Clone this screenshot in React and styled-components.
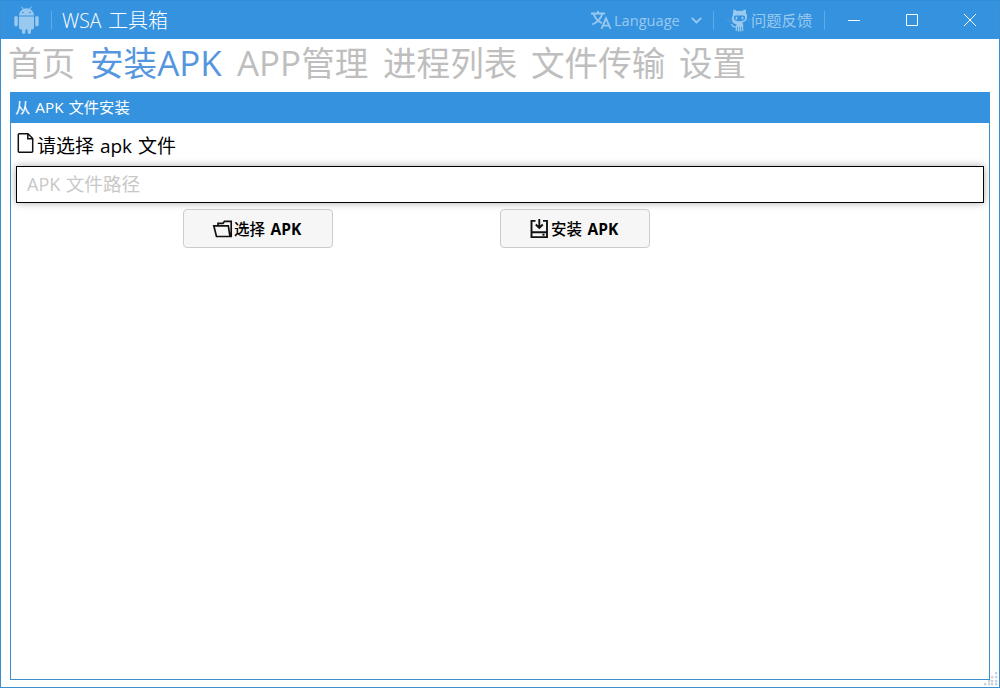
import React from 'react';
import styled, { createGlobalStyle } from 'styled-components';

const Global = createGlobalStyle`
  * { box-sizing: border-box; }
  body { margin: 0; font-family: "Open Sans", "Noto Sans CJK SC", sans-serif; }
`;

const Window = styled.div`
  position: relative;
  display: flex;
  flex-direction: column;
  width: 1000px;
  height: 688px;
  overflow: hidden;
  background: #fff;
  border: 1px solid #3b8fd0;
  border-top: 0;
`;

const TitleBar = styled.header`
  display: flex;
  align-items: center;
  flex: none;
  height: 39px;
  padding-left: 13px;
  background: #3492df;
  border-top: 1px solid #2b8ddc;
  color: #99c9ef;
`;

const Divider = styled.i`
  width: 1px;
  height: 19px;
  margin-left: ${(p) => p.$left || 0}px;
  background: #5fabe7;
`;

const Icon = styled.svg`
  display: block;
  flex: none;
  overflow: visible;
`;

const Text = styled.span`
  display: block;
  flex: none;
  width: ${(p) => p.$w}px;
  font-size: ${(p) => p.$size}px;
  line-height: 1.4;
  text-align: left;
  white-space: nowrap;
  font-weight: ${(p) => p.$weight || 400};
  word-spacing: ${(p) => p.$space || 0}px;
`;

const Latin = styled.span`
  font-size: ${(p) => p.$size || 1}em;
  font-weight: ${(p) => p.$weight || 'inherit'};
`;

const Title = styled(Text)`
  margin-left: 10px;
  padding-top: 1px;
  color: #fff;
`;

const Actions = styled.div`
  display: flex;
  align-items: center;
  height: 100%;
  margin-left: auto;
`;

const Action = styled.button`
  display: flex;
  align-items: center;
  width: ${(p) => p.$w}px;
  height: 38px;
  padding: 0 0 0 ${(p) => p.$pad}px;
  gap: ${(p) => p.$gap || 0}px;
  border: 0;
  background: none;
  color: inherit;
  font-family: inherit;
`;

const ActionText = styled(Text)`
  padding-top: 1px;
`;

const Control = styled.button`
  display: flex;
  align-items: center;
  justify-content: center;
  width: 58px;
  height: 38px;
  padding: 0;
  border: 0;
  background: none;
  color: #f4faff;
`;

const Tabs = styled.nav`
  display: flex;
  align-items: center;
  flex: none;
  height: 53px;
  padding: 0 0 4px 7px;
  gap: 15px;
`;

const Tab = styled(Text)`
  color: ${(p) => (p.$active ? '#5596de' : '#bebebe')};
`;

const Panel = styled.main`
  display: flex;
  flex-direction: column;
  flex: 1;
  margin: 0 9px 7px;
  border: 1px solid #3b8fd0;
`;

const PanelHeader = styled.div`
  display: flex;
  align-items: center;
  flex: none;
  height: 31px;
  margin: -1px -1px 0;
  padding-left: 5px;
  background: #3492df;
  color: #fff;
`;

const Form = styled.div`
  padding: 0 5px;
`;

const Label = styled.label`
  display: flex;
  align-items: center;
  height: 43px;
  padding: 3px 0 0 1px;
  gap: 3px;
  color: #000;
`;

const FileIcon = styled(Icon)`
  margin-top: -6px;
`;

const Field = styled.div`
  display: flex;
  align-items: center;
  height: 37px;
  padding: 0 0 0 10px;
  border: 1px solid #000;
  background: #fff;
  box-shadow: 0 0 8px rgba(0, 0, 0, 0.32);
  color: #c8c8c8;
`;

const Buttons = styled.div`
  display: flex;
  gap: 167px;
  padding: 6px 0 0 167px;
`;

const Button = styled.button`
  display: flex;
  align-items: center;
  width: 150px;
  height: 39px;
  padding: 0 0 0 28px;
  border: 1px solid #ccc;
  border-radius: 4px;
  background: #f6f6f6;
  color: #000;
  font-family: inherit;
`;

const ButtonText = styled(Text)`
  padding-top: 2px;
`;

const Grip = styled.svg`
  position: absolute;
  right: 0;
  bottom: 0;
`;

const Android = () => (
  <Icon width="25" height="28" viewBox="0 0 25 28" fill="currentColor">
    <path d="M5 9.6C5 6.5 6.7 4.5 8.8 3.2L7.2.9l.7-.5 1.7 2.4a9 9 0 0 1 5.8 0L17.1.4l.7.5-1.6 2.3C18.3 4.5 20 6.5 20 9.6zM9 5.7a.8.8 0 1 0 0 1.6.8.8 0 0 0 0-1.6m7 0a.8.8 0 1 0 0 1.6.8.8 0 0 0 0-1.6" fillRule="evenodd" />
    <path d="M5 10.6h15v11.2q0 1.7-1.7 1.7H17v2.7a1.7 1.7 0 0 1-3.4 0v-2.7h-2.2v2.7a1.7 1.7 0 0 1-3.4 0v-2.7H6.7Q5 23.5 5 21.8z" />
    <rect x="0.3" y="10" width="3.5" height="10.5" rx="1.75" />
    <rect x="21.2" y="10" width="3.5" height="10.5" rx="1.75" />
  </Icon>
);

const Translate = () => (
  <Icon width="20" height="19" viewBox="0 0 20 19" fill="none" stroke="currentColor" strokeWidth="1.8">
    <path d="M0 2.5h14M7 0v2.5M2.8 3c1 4 4 7 8.2 9.3M11.3 2.5c-1 4.5-4.500 8.500-10 11" />
    <path d="M10.500 17.900 15 7.300l4.500 10.600M12 14.700h6" />
  </Icon>
);

const Octocat = () => (
  <Icon width="22" height="23" viewBox="0 0 22 23">
    <path fill="currentColor" d="M4.3.6c1.500 0 2.700.8 3.500 1.300a17 17 0 0 1 5.400 0C14 1.400 15.200.6 16.700.6c.5 1.400.4 2.600.1 3.500 1.300 1.600 1.500 3.400 1 5.400-.7 2.700-2.700 3.600-4.800 4 .9.700 1.200 1.800 1.200 3v4.100c0 .7.400 1 .8 1.200h-2.200v-4h-.7v4.700h-1.300v-4.700h-.6v4.700H8.900v-4.700h-.7v4H6c.5-.2.800-.5.800-1.200v-2.200c-2 .4-3.300-.2-4-1.700-.4-.8-.8-1.300-1.500-1.600 1.500-.3 2.300.5 2.900 1.300.7.900 1.500 1.100 2.700.7.100-.7.400-1.200.9-1.600-2.300-.4-4.100-1.400-4.700-4-.5-2.100-.2-4 1-5.400-.3-1-.3-2.100.2-3.500" />
    <path fill="#3492df" d="M6.800 6.600c1.600-.2 5.800-.2 7.400 0 1.500.1 2.100 1.200 1.900 2.700-.3 2.300-2.100 2.900-5.600 2.900s-5.300-.6-5.600-2.900c-.2-1.500.4-2.600 1.900-2.700" />
    <g fill="currentColor"><ellipse cx="7.5" cy="8.9" rx="1" ry="1.5" /><ellipse cx="13.5" cy="8.9" rx="1" ry="1.5" /></g>
    <path stroke="currentColor" strokeWidth=".5" opacity=".35" d="M-3 10.5l6-.3M-1 12.5l4-.6M18 10.2l5 .3M18 12l3 .7" />
  </Icon>
);

export default function App() {
  const grip = [[11, 0], [7, 4], [11, 4], [4, 8], [7, 8], [11, 8], [0, 11], [4, 11], [7, 11], [11, 11]];
  return (
    <>
      <Global />
      <Window>
        <TitleBar>
          <Android />
          <Divider $left={12} />
          <Title $w={110} $size={19.9} $weight={300} $space={1.8}><Latin $size={0.97}>WSA </Latin>工具箱</Title>
          <Actions>
            <Action $w={123} $pad={1} $gap={3}>
              <Translate />
              <ActionText $w={74} $size={14.6}>Language</ActionText>
              <Icon width="11" height="7" viewBox="0 0 11 7" fill="none" stroke="currentColor" strokeWidth="1.8">
                <path d="m.8.8 4.700 4.700L10.200.8" />
              </Icon>
            </Action>
            <Divider />
            <Action $w={110} $pad={15}>
              <Octocat />
              <ActionText $w={64} $size={15.3}>问题反馈</ActionText>
            </Action>
            <Divider />
            <Control>
              <Icon width="12" height="12" stroke="currentColor"><path d="M0 6.500h12" /></Icon>
            </Control>
            <Control>
              <Icon width="12" height="12" fill="none" stroke="currentColor"><path d="M.5.5h11v11H.5z" /></Icon>
            </Control>
            <Control>
              <Icon width="12" height="12" stroke="currentColor"><path d="m0 0 12 12M12 0 0 12" /></Icon>
            </Control>
          </Actions>
        </TitleBar>
        <Tabs>
          <Tab $w={67} $size={33.6}>首页</Tab>
          <Tab $w={132} $size={33.6} $active>安装<Latin $size={1.04}>APK</Latin></Tab>
          <Tab $w={131} $size={33.6}><Latin $size={1.04}>APP</Latin>管理</Tab>
          <Tab $w={133} $size={33.6}>进程列表</Tab>
          <Tab $w={133} $size={33.6}>文件传输</Tab>
          <Tab $w={67} $size={33.6}>设置</Tab>
        </Tabs>
        <Panel>
          <PanelHeader>
            <Text $w={120} $size={15.3} $space={1}>从 <Latin>APK</Latin> 文件安装</Text>
          </PanelHeader>
          <Form>
            <Label>
              <FileIcon width="17" height="20" viewBox="0 0 17 20" fill="none" stroke="#111" strokeWidth="1.5">
                <path d="M2.200.8h8.800l4.700 4.700v12.800q0 .9-.9.900H2.200q-.9 0-.9-.9V1.700q0-.9.900-.9M10.800.8v4.900h4.900" />
              </FileIcon>
              <Text $w={145} $size={19} $space={1}>请选择 <Latin>apk</Latin> 文件</Text>
            </Label>
            <Field>
              <Text $w={120} $size={18.6} $space={0.6}><Latin $size={0.97}>APK</Latin> 文件路径</Text>
            </Field>
            <Buttons>
              <Button>
                <Icon width="22" height="18" viewBox="0 0 22 18" fill="none" stroke="#111" strokeWidth="1.7">
                  <path d="M4.500 16.500 1.800 5.800h14.500l1.700 10.700zM6 5.500V3.300h5l1.500-2h6.700v15.200H18" />
                </Icon>
                <ButtonText $w={75} $size={15.5} $weight={500} $space={1.5}>选择 <Latin $weight={700}>APK</Latin></ButtonText>
              </Button>
              <Button>
                <Icon width="22" height="20" viewBox="0 0 22 20" fill="none" stroke="#111" strokeWidth="1.9">
                  <path d="M6.500 1.900h-4v16.200H18V1.900h-4M2.500 13.200H18M10.300 0v8.500M6.800 5.500l3.500 3.500 3.500-3.500M13.500 15.700h2" />
                </Icon>
                <ButtonText $w={75} $size={15.5} $weight={500} $space={1.5}>安装 <Latin $weight={700}>APK</Latin></ButtonText>
              </Button>
            </Buttons>
          </Form>
        </Panel>
        <Grip width="15" height="15" fill="#c9cfdc">
          {grip.map(([x, y]) => <rect key={`${x}-${y}`} x={x} y={y} width="2.3" height="2.3" />)}
        </Grip>
      </Window>
    </>
  );
}
